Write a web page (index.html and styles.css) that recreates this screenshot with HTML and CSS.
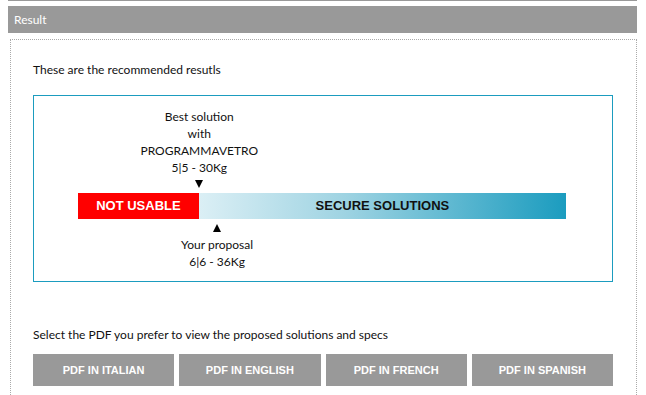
FILE: index.html
```html
<!DOCTYPE html>
<html lang="en">
<head>
    <meta charset="UTF-8">
    <meta name="viewport" content="width=device-width, initial-scale=1.0">
    <title>Result</title>
    <link rel="stylesheet" href="styles.css">
</head>
<body>
    <div class="top-rule"></div>
    <div class="panel-title">Result</div>

    <div class="panel">
        <p class="intro">These are the recommended resutls</p>

        <div class="chart">
            <div class="scale">
                <div class="marker marker-top" style="margin-left: 24.85%">
                    <span>Best solution</span>
                    <span>with</span>
                    <span>PROGRAMMAVETRO</span>
                    <span>5|5 - 30Kg</span>
                    <span class="arrow-down"></span>
                </div>

                <div class="bar">
                    <div class="bar-bad" style="width: 24.75%">NOT USABLE</div>
                    <div class="bar-good">SECURE SOLUTIONS</div>
                </div>

                <div class="marker marker-bottom" style="margin-left: 28.5%">
                    <span class="arrow-up"></span>
                    <span>Your proposal</span>
                    <span>6|6 - 36Kg</span>
                </div>
            </div>
        </div>

        <p class="pdf-label">Select the PDF you prefer to view the proposed solutions and specs</p>
        <div class="pdf-buttons">
            <button type="button">PDF IN ITALIAN</button>
            <button type="button">PDF IN ENGLISH</button>
            <button type="button">PDF IN FRENCH</button>
            <button type="button">PDF IN SPANISH</button>
        </div>
    </div>
</body>
</html>
```

FILE: styles.css
```css
body {
    margin: 0 9px 0 8px;
    font-family: Lato, "Liberation Sans", Arial, sans-serif;
    font-size: 12px;
    color: #111;
    background: #fff;
}
.top-rule {
    height: 1px;
    background: #999;
}
.panel-title {
    margin-top: 5px;
    height: 27px;
    line-height: 27px;
    padding-left: 6px;
    background: #999;
    color: #fff;
    font-size: 12px;
}
.panel {
    margin: 6px 0 0 2px;
    border: 1px dotted #aaa;
    padding: 22px 23px 30px 22px;
}
.intro {
    margin: 0;
    line-height: 16px;
}
.chart {
    margin-top: 17px;
    border: 1px solid #1b9cbf;
    padding: 12px 0 11px;
}
.scale {
    margin: 0 46px 0 44px;
}
.marker {
    width: 0;
    display: flex;
    flex-direction: column;
    align-items: center;
    white-space: nowrap;
    line-height: 17px;
}
.marker span {
    display: block;
}
.arrow-down,
.arrow-up {
    width: 0;
    height: 0;
    border-left: 4.5px solid transparent;
    border-right: 4.5px solid transparent;
}
.arrow-down {
    border-top: 8px solid #000;
    margin-top: 4px;
    margin-bottom: 5px;
}
.arrow-up {
    border-bottom: 8px solid #000;
    margin-top: 5px;
    margin-bottom: 4px;
}
.bar {
    display: flex;
    height: 26px;
    font-family: "Liberation Sans", Arial, sans-serif;
    font-weight: bold;
    font-size: 13px;
    line-height: 26px;
    text-align: center;
}
.bar-bad {
    background: #ff0000;
    color: #fff;
}
.bar-good {
    flex: 1;
    background: linear-gradient(to right, #dbeff5, #9ed3e2 40%, #1b9cbf);
    color: #111;
}
.pdf-label {
    margin: 45px 0 0;
    line-height: 16px;
}
.pdf-buttons {
    margin-top: 11px;
    display: grid;
    grid-template-columns: repeat(4, 1fr);
    gap: 5px;
}
.pdf-buttons button {
    height: 32px;
    border: none;
    background: #999;
    color: #fff;
    font-family: "Liberation Sans", Arial, sans-serif;
    font-weight: bold;
    font-size: 11px;
    cursor: pointer;
}
.pdf-buttons button:hover {
    background: #888;
}
```
